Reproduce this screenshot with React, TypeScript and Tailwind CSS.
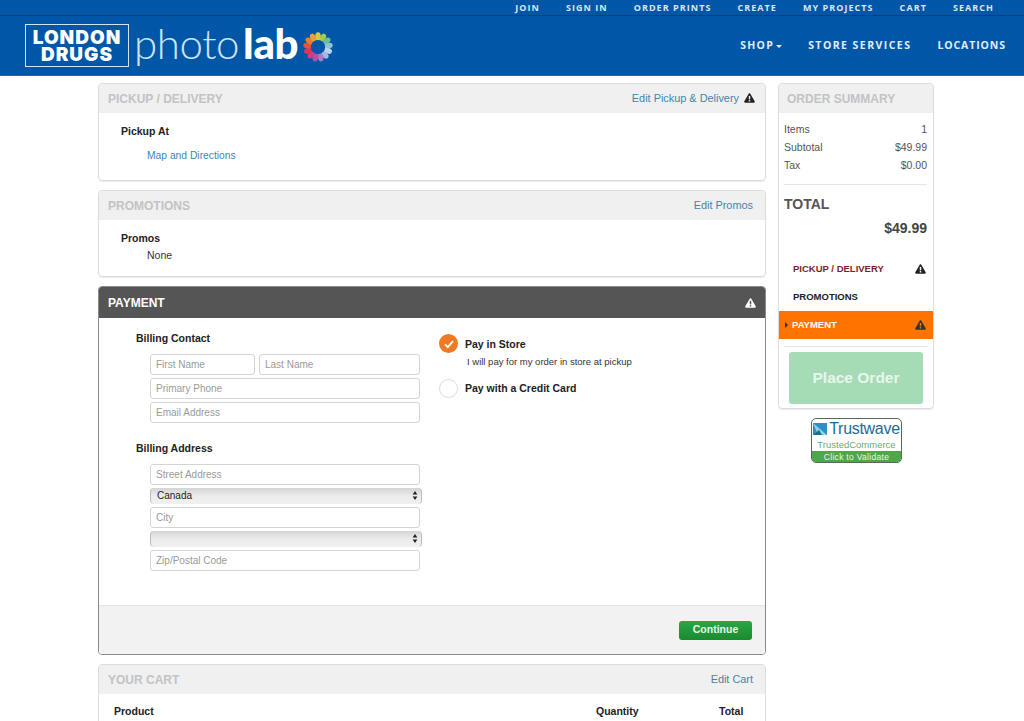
import React from "react";

const sans = "font-['Liberation_Sans',Arial,sans-serif]";
const nav = "font-['Open_Sans',sans-serif]";

function Warn({ className = "", mark = "#fff" }: { className?: string; mark?: string }) {
  return (
    <svg viewBox="0 0 12 11" className={`w-[11px] h-[10px] shrink-0 ${className}`}>
      <path d="M6 .4c.4 0 .7.2.9.5l4.8 8.3c.4.7-.1 1.5-.9 1.5H1.2c-.8 0-1.3-.8-.9-1.5L5.1.9C5.3.6 5.6.4 6 .4z" fill="currentColor" />
      <rect x="5.2" y="3.2" width="1.6" height="3.8" fill={mark} />
      <rect x="5.2" y="7.8" width="1.6" height="1.5" fill={mark} />
    </svg>
  );
}

function Flower() {
  const colors = ["#d8c93e","#a8c850","#6dbb9a","#8cc4d6","#b9d3e6","#a9b6de","#a67cc6","#b64fa8","#cf3c86","#dd3450","#e8503a","#ee7a2f","#f0a030"];
  return (
    <svg viewBox="0 0 32 32" className="w-[30px] h-[30px]">
      {colors.map((c, i) => (
        <ellipse key={i} cx="16" cy="4.8" rx="3" ry="4.6" fill={c} transform={`rotate(${(i * 360) / 13} 16 16)`} />
      ))}
      <circle cx="16" cy="16" r="7.6" fill="#0057a8" />
    </svg>
  );
}

function Updown({ className = "" }: { className?: string }) {
  return (
    <svg viewBox="0 0 6 10" className={`w-[6px] h-[9px] ${className}`}>
      <path d="M3 0l2.6 4H.4zM3 10L.4 6h5.2z" fill="#222" />
    </svg>
  );
}

function Field({ placeholder, className = "" }: { placeholder: string; className?: string }) {
  return (
    <input
      placeholder={placeholder}
      className={`h-[21px] block bg-white border border-[#d4d4d4] rounded-[3px] px-[5px] text-[10px] text-[#444] placeholder:text-[#9a9a9a] outline-none ${className}`}
    />
  );
}

function FakeSelect({ label }: { label: string }) {
  return (
    <div className="relative w-[272px] h-[16px] rounded-[4px] border-x border-[#bdbdbd] bg-gradient-to-b from-[#d4d4d4] via-[#ececec] to-[#f0f0f0] pl-[6px] text-[10px] leading-[15px] text-[#222]">
      {label}
      <Updown className="absolute right-[3px] top-[3px]" />
    </div>
  );
}

function PanelHead({ title, action, warn }: { title: string; action: string; warn?: boolean }) {
  return (
    <div className={`h-[29px] bg-[#f0f0f0] flex items-center justify-between pl-[9px] rounded-t-[3px] ${warn ? "pr-[10px]" : "pr-[12px]"}`}>
      <span className="text-[12px] font-bold text-[#c3c3c3]">{title}</span>
      <span className="flex items-center gap-[5px] text-[10.9px] text-[#3f87ad]">
        {action}
        {warn && <Warn className="text-[#222]" mark="#f0f0f0" />}
      </span>
    </div>
  );
}

function SumRow({ l, r }: { l: string; r: string }) {
  return (
    <div className="flex justify-between h-[18px] items-center text-[10.5px] text-[#555]">
      <span>{l}</span>
      <span>{r}</span>
    </div>
  );
}

export default function App() {
  return (
    <div className={`${sans} w-[1024px] h-[721px] overflow-hidden bg-white`}>
      <header className="h-[76px] bg-[#0057a8] border-b border-b-[#1e6fa8]">
        <div className={`${nav} h-[16px] border-b border-b-[#0b3f78] flex justify-end items-center gap-[26px] pr-[30px] pt-[1px] text-[9px] font-bold tracking-[1.05px] text-[#dbe6f2]`}>
          <span>JOIN</span>
          <span>SIGN IN</span>
          <span>ORDER PRINTS</span>
          <span>CREATE</span>
          <span>MY PROJECTS</span>
          <span>CART</span>
          <span>SEARCH</span>
        </div>
        <div className="h-[59px] flex items-center justify-between pl-[25px] pr-[18px]">
          <div className="flex items-center">
            <div className="w-[104px] h-[43px] border border-[#d5e3f0] flex flex-col items-center justify-center text-white font-['Inter',sans-serif] font-black text-[19px] leading-[17px] tracking-[1px]">
              <span>LONDON</span>
              <span>DRUGS</span>
            </div>
            <div className="font-['Lato',sans-serif] text-[42px] leading-[46px] text-white ml-[5px] tracking-[-0.4px] -mt-[5px]">
              <span className="font-light text-[#cfe4f3]">photo</span>
              <span className="font-black ml-[4px]">lab</span>
            </div>
            <div className="ml-[5px] mt-[3px]"><Flower /></div>
          </div>
          <nav className={`${nav} flex items-center gap-[26px] text-[10.5px] font-bold text-[#e3ecf5]`}>
            <span className="flex items-center gap-[2px] tracking-[1.3px]">SHOP<span className="w-0 h-0 border-x-[3px] border-x-transparent border-t-[3px] border-t-[#e3ecf5] mt-[2px]" /></span>
            <span className="tracking-[1.45px]">STORE SERVICES</span>
            <span className="tracking-[0.9px]">LOCATIONS</span>
          </nav>
        </div>
      </header>

      <main className="flex items-start gap-[12px] pl-[98px] pt-[7px]">
        <div className="w-[668px] flex flex-col gap-[9px]">
          <section className="h-[98px] border border-[#dcdcdc] rounded-[4px] shadow-[0_1px_1px_rgba(0,0,0,0.08)]">
            <PanelHead title="PICKUP / DELIVERY" action="Edit Pickup & Delivery" warn />
            <div className="pl-[22px] pt-[11px]">
              <div className="text-[10.5px] font-bold text-[#222] leading-[14px]">Pickup At</div>
              <div className="pl-[26px] pt-[11px] text-[10.3px] leading-[14px] text-[#3f87ad]">Map and Directions</div>
            </div>
          </section>

          <section className="h-[87px] border border-[#dcdcdc] rounded-[4px] shadow-[0_1px_1px_rgba(0,0,0,0.08)]">
            <PanelHead title="PROMOTIONS" action="Edit Promos" />
            <div className="pl-[22px] pt-[11px]">
              <div className="text-[10.5px] font-bold text-[#222] leading-[14px]">Promos</div>
              <div className="pl-[26px] pt-[3px] text-[10.5px] leading-[14px] text-[#333]">None</div>
            </div>
          </section>

          <section className="h-[369px] border border-[#8a8a8a] rounded-[4px] flex flex-col overflow-hidden">
            <div className="h-[31px] bg-[#555555] flex items-center justify-between pl-[9px] pr-[9px]">
              <span className="text-[12px] font-bold text-white">PAYMENT</span>
              <Warn className="text-white" mark="#555" />
            </div>
            <div className="flex-1 flex">
              <div className="w-[340px] pl-[37px] pt-[13px]">
                <div className="text-[10.5px] font-bold text-[#222] leading-[14px]">Billing Contact</div>
                <div className="pl-[14px] pt-[9px] flex flex-col gap-[3px]">
                  <div className="flex gap-[4px]">
                    <Field placeholder="First Name" className="w-[105px]" />
                    <Field placeholder="Last Name" className="w-[161px]" />
                  </div>
                  <Field placeholder="Primary Phone" className="w-[270px]" />
                  <Field placeholder="Email Address" className="w-[270px]" />
                </div>
                <div className="text-[10.5px] font-bold text-[#222] leading-[14px] pt-[18px]">Billing Address</div>
                <div className="pl-[14px] pt-[9px] flex flex-col gap-[3px]">
                  <Field placeholder="Street Address" className="w-[270px]" />
                  <FakeSelect label="Canada" />
                  <Field placeholder="City" className="w-[270px]" />
                  <FakeSelect label="" />
                  <Field placeholder="Zip/Postal Code" className="w-[270px]" />
                </div>
              </div>
              <div className="pt-[16px]">
                <div className="flex items-start gap-[7px]">
                  <span className="w-[19px] h-[19px] rounded-full bg-[#f07a22] flex items-center justify-center">
                    <svg viewBox="0 0 12 12" className="w-[12px] h-[12px]"><path d="M2 6.3l2.8 2.8L10 3.2" fill="none" stroke="#fff" strokeWidth="1.9" /></svg>
                  </span>
                  <div>
                    <div className="text-[10.5px] font-bold text-[#222] leading-[14px] pt-[3px]">Pay in Store</div>
                    <div className="text-[9.5px] text-[#333] leading-[12px] pl-[2px] pt-[5px]">I will pay for my order in store at pickup</div>
                  </div>
                </div>
                <div className="flex items-center gap-[7px] mt-[11px]">
                  <span className="w-[19px] h-[19px] rounded-full bg-white border border-[#dcdcdc]" />
                  <span className="text-[10.5px] font-bold text-[#222]">Pay with a Credit Card</span>
                </div>
              </div>
            </div>
            <div className="h-[49px] bg-[#f2f2f2] border-t border-t-[#e2e2e2] flex items-center justify-end pr-[13px]">
              <span className="w-[73px] h-[19px] rounded-[3px] bg-gradient-to-b from-[#28a745] to-[#1b8a2e] text-[10.5px] font-bold text-[#e8f5e8] flex items-center justify-center">Continue</span>
            </div>
          </section>

          <section className="h-[80px] border border-[#dcdcdc] rounded-[4px]">
            <PanelHead title="YOUR CART" action="Edit Cart" />
            <div className="flex items-center h-[36px] text-[10.5px] font-bold text-[#222]">
              <span className="pl-[15px] w-[497px]">Product</span>
              <span className="w-[123px]">Quantity</span>
              <span>Total</span>
            </div>
          </section>
        </div>

        <aside className="w-[156px]">
          <div className="h-[326px] border border-[#dcdcdc] rounded-[4px] shadow-[0_1px_1px_rgba(0,0,0,0.08)]">
            <div className="h-[29px] bg-[#f0f0f0] flex items-center pl-[8px] rounded-t-[3px]">
              <span className="text-[12px] font-bold text-[#c3c3c3]">ORDER SUMMARY</span>
            </div>
            <div className="pl-[5px] pr-[6px] pt-[8px]">
              <SumRow l="Items" r="1" />
              <SumRow l="Subtotal" r="$49.99" />
              <SumRow l="Tax" r="$0.00" />
              <div className="h-[1px] bg-[#e6e6e6] mt-[9px]" />
              <div className="text-[14px] font-bold text-[#555] leading-[16px] pt-[11px]">TOTAL</div>
              <div className="text-[14px] font-bold text-[#444] leading-[16px] text-right pt-[8px]">$49.99</div>
            </div>
            <div className="mt-[19px] text-[9.5px] font-bold">
              <div className="h-[28px] flex items-center justify-between pl-[14px] pr-[7px] text-[#7a1f2b]">
                PICKUP / DELIVERY<Warn className="text-[#222]" />
              </div>
              <div className="h-[28px] flex items-center pl-[14px] text-[#222]">PROMOTIONS</div>
              <div className="h-[28px] bg-[#ff7300] flex items-center justify-between pl-[6px] pr-[7px] text-white">
                <span className="flex items-center gap-[4px]">
                  <span className="w-0 h-0 border-y-[3px] border-y-transparent border-l-[3px] border-l-[#333]" />
                  PAYMENT
                </span>
                <Warn className="text-[#333]" mark="#ff7300" />
              </div>
            </div>
            <div className="h-[1px] bg-[#e6e6e6] mx-[5px] mt-[7px]" />
            <div className="mx-[10px] mt-[5px] h-[52px] rounded-[3px] bg-[#a5dbb5] flex items-center justify-center text-[15.5px] font-bold text-[#e9f6ec]">Place Order</div>
          </div>
          <div className="mt-[9px] ml-[33px] w-[91px] h-[45px] rounded-[5px] border border-[#5a6a5a] overflow-hidden flex flex-col bg-white">
            <div className="h-[20px] flex items-center justify-center gap-[2px] text-[16px] leading-[20px] text-[#1c6b94]">
              <svg viewBox="0 0 14 12" className="w-[14px] h-[12px]"><rect width="14" height="12" fill="#2e8fc4" /><path d="M0 0l14 12H5z" fill="#8fd0ea" /><path d="M0 12l6-5 3 5z" fill="#1c6b94" /></svg>
              <span className="tracking-[-0.3px]">Trustwave</span>
            </div>
            <div className="h-[12px] text-[9.5px] leading-[12px] text-center text-[#6fa873]">TrustedCommerce</div>
            <div className="flex-1 bg-[#4ea84a] text-[8.5px] leading-[12px] text-center text-[#e9f6e6] tracking-[0.3px]">Click to Validate</div>
          </div>
        </aside>
      </main>
    </div>
  );
}
